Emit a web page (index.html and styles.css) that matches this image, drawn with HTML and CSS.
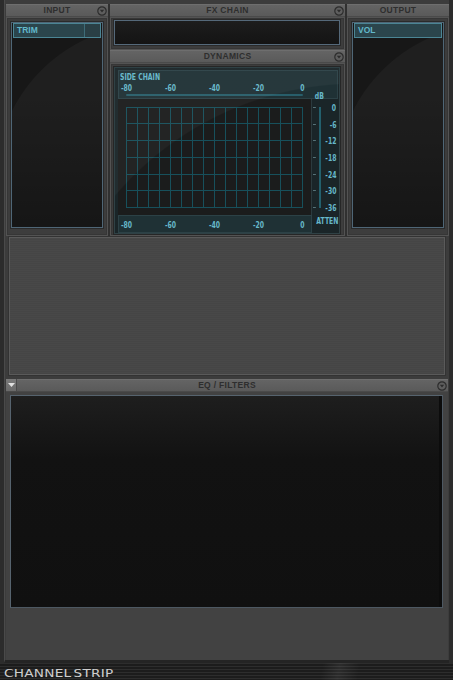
FILE: index.html
```html
<!DOCTYPE html>
<html lang="en">
<head>
<meta charset="utf-8">
<title>Channel Strip</title>
<link rel="stylesheet" href="styles.css">
</head>
<body>
<div class="strip">
  <div class="main">
    <div class="top">
      <section class="col">
        <header class="hdr">
          <span class="hdr-title">INPUT</span>
          <svg class="hdr-icon" width="10" height="10" viewBox="0 0 10 10"><circle cx="5" cy="5" r="4.2" fill="#5e5e5e" stroke="#2c2c2c" stroke-width="1.2"/><path d="M2.8 3.7H7.2L5 6.6Z" fill="#2c2c2c"/></svg>
        </header>
        <div class="col-body io-body">
          <div class="slot">
            <div class="slot-label"><span class="slot-name">TRIM</span><span class="slot-seg"></span></div>
          </div>
        </div>
      </section>

      <section class="col">
        <header class="hdr">
          <span class="hdr-title">FX CHAIN</span>
          <svg class="hdr-icon" width="10" height="10" viewBox="0 0 10 10"><circle cx="5" cy="5" r="4.2" fill="#5e5e5e" stroke="#2c2c2c" stroke-width="1.2"/><path d="M2.8 3.7H7.2L5 6.6Z" fill="#2c2c2c"/></svg>
        </header>
        <div class="col-body fx-body">
          <div class="fx-box"></div>
        </div>
        <header class="hdr">
          <span class="hdr-title">DYNAMICS</span>
          <svg class="hdr-icon" width="10" height="10" viewBox="0 0 10 10"><circle cx="5" cy="5" r="4.2" fill="#5e5e5e" stroke="#2c2c2c" stroke-width="1.2"/><path d="M2.8 3.7H7.2L5 6.6Z" fill="#2c2c2c"/></svg>
        </header>
        <div class="col-body dyn-body">
          <div class="dyn">
            <div class="sc-box">
              <div class="sc-title"><span class="nt nt-left">SIDE CHAIN</span></div>
              <div class="scale sc-scale"><span class="nt">-80</span><span class="nt">-60</span><span class="nt">-40</span><span class="nt">-20</span><span class="nt">0</span></div>
              <div class="sc-bar"></div>
              <div class="db"><span class="nt">dB</span></div>
            </div>
            <div class="graph">
              <svg class="grid-svg" width="177" height="101" viewBox="0 0 177 101">
                <g stroke="#17505b" stroke-width="1" fill="none">
                  <path d="M0.5 0V101M11.5 0V101M22.5 0V101M33.5 0V101M44.5 0V101M55.5 0V101M66.5 0V101M77.5 0V101M88.5 0V101M99.5 0V101M110.5 0V101M121.5 0V101M132.5 0V101M143.5 0V101M154.5 0V101M165.5 0V101M176.5 0V101"/>
                  <path d="M0 0.5H177M0 16.5H177M0 33.5H177M0 50.5H177M0 67.5H177M0 83.5H177M0 100.5H177"/>
                </g>
              </svg>
            </div>
            <div class="atten">
              <div class="ticks"><i></i><i></i><i></i><i></i><i></i><i></i><i></i></div>
              <div class="vbar"></div>
              <div class="atten-labels"><span class="nt nt-right">0</span><span class="nt nt-right">-6</span><span class="nt nt-right">-12</span><span class="nt nt-right">-18</span><span class="nt nt-right">-24</span><span class="nt nt-right">-30</span><span class="nt nt-right">-36</span></div>
            </div>
            <div class="in-box">
              <div class="scale"><span class="nt">-80</span><span class="nt">-60</span><span class="nt">-40</span><span class="nt">-20</span><span class="nt">0</span></div>
            </div>
            <div class="atten-title"><span class="nt">ATTEN</span></div>
          </div>
        </div>
      </section>

      <section class="col">
        <header class="hdr">
          <span class="hdr-title">OUTPUT</span>
        </header>
        <div class="col-body io-body">
          <div class="slot">
            <div class="slot-label"><span class="slot-name">VOL</span></div>
          </div>
        </div>
      </section>
    </div>

    <div class="blank-wrap">
      <div class="blank-panel"></div>
    </div>

    <header class="hdr eq-hdr">
      <span class="eq-btn"><svg width="7" height="4" viewBox="0 0 7 4"><path d="M0 0H7L3.5 4Z" fill="#e2e2e2"/></svg></span>
      <span class="hdr-title">EQ / FILTERS</span>
      <svg class="hdr-icon" width="10" height="10" viewBox="0 0 10 10"><circle cx="5" cy="5" r="4.2" fill="#5e5e5e" stroke="#2c2c2c" stroke-width="1.2"/><path d="M2.8 3.7H7.2L5 6.6Z" fill="#2c2c2c"/></svg>
    </header>
    <div class="eq-body">
      <div class="eq-screen"></div>
    </div>
  </div>
  <footer class="footer"><span class="footer-title">CHANNEL STRIP</span></footer>
</div>
</body>
</html>
```

FILE: styles.css
```css
* { box-sizing: border-box; margin: 0; padding: 0; }

html, body { width: 453px; height: 680px; overflow: hidden; }

body {
  background: #2b2b2b;
  font-family: "Liberation Sans", Arial, sans-serif;
}

.strip {
  width: 453px;
  height: 680px;
  display: flex;
  flex-direction: column;
  background: #2c2c2c;
}

.main {
  width: 445px;
  height: 663px;
  margin-left: 4px;
  padding: 4px 1px 0 1px;
  background: #3c3c3c;
  border-left: 1px solid #4a4a4a;
  border-bottom: 3px solid #242424;
  display: flex;
  flex-direction: column;
}

/* ---------- headers ---------- */
.hdr {
  height: 13px;
  flex: none;
  display: grid;
  grid-template-columns: 11px 1fr 11px;
  align-items: center;
  background: linear-gradient(#646464, #5a5a5a);
  border-top: 1px solid #6e6e6e;
  border-bottom: 1px solid #4a4a4a;
  font-size: 8.5px;
  font-weight: bold;
  letter-spacing: 0.3px;
  color: #2e2e2e;
  line-height: 11px;
}

.hdr-title {
  grid-column: 2;
  text-align: center;
}

.hdr-icon {
  grid-column: 3;
  display: block;
  justify-self: start;
}

/* ---------- top row ---------- */
.top {
  height: 232px;
  flex: none;
  display: grid;
  grid-template-columns: 102px 235px 102px;
  column-gap: 2px;
  background: #303030;
}

.col {
  display: flex;
  flex-direction: column;
  background: #3c3c3c;
}

.col-body {
  border: 1px solid #535353;
  box-shadow: inset 0 0 0 1px #363636;
  background: #3d3d3d;
}

.io-body {
  flex: 1;
  padding: 4px 4px 7px 4px;
  display: flex;
}

.slot {
  flex: 1;
  border: 1px solid #4f6676;
  box-shadow: 0 0 0 1px #2a2a2a;
  padding: 0 1px;
  background:
    linear-gradient(to bottom, rgba(0,0,0,0) 35%, rgba(0,0,0,0.3) 100%),
    radial-gradient(circle 157px at 140px 158px, #1f1f1f 99.4%, #171717 100%);
}

.slot-label {
  height: 15px;
  display: flex;
  background: #2b454c;
  border: 1px solid #4b8594;
  color: #62b8ca;
  font-size: 8.5px;
  font-weight: bold;
  line-height: 13px;
}

.slot-name {
  flex: 1;
  padding-left: 3px;
}

.slot-seg {
  width: 16px;
  border-left: 1px solid #3e6c78;
  background: #2a3f45;
}

.fx-body {
  height: 33px;
  flex: none;
  padding: 2px 4px 4px 3px;
  display: flex;
}

.fx-box {
  flex: 1;
  border: 1px solid #55697a;
  box-shadow: 0 0 0 1px #2a2a2a;
  background: linear-gradient(#1d1d1d, #141414);
}

.dyn-body {
  flex: 1;
  padding: 3px 4px 1px 3px;
  display: flex;
}

/* ---------- dynamics ---------- */
.dyn {
  position: relative;
  width: 226px;
  height: 167px;
  border: 1px solid #2f4145;
  box-shadow: 0 0 0 1px #262626;
  background: #1a2528;
  padding: 2px 1px 0 3px;
  display: grid;
  grid-template-columns: 194px 26px;
  grid-template-rows: 29px 116px 18px;
  font-family: "DejaVu Sans Condensed", "Liberation Sans", sans-serif;
  font-weight: bold;
  font-size: 9.5px;
  line-height: 9px;
  color: #66b8ca;
}

.nt {
  display: inline-block;
  transform: scaleX(0.72);
  transform-origin: center;
}

.nt-left { transform-origin: left center; }
.nt-right { transform-origin: right center; }

.dyn::after {
  content: "";
  position: absolute;
  inset: 0;
  pointer-events: none;
  background: radial-gradient(circle 318px at 242px 333px, rgba(255,255,255,0) 99.6%, rgba(255,255,255,0.035) 100%);
}

.sc-box {
  grid-column: 1 / 3;
  display: grid;
  grid-template-columns: 1fr auto;
  grid-template-rows: 9px 9px 2px;
  row-gap: 1px;
  align-content: start;
  padding-top: 1px;
  background: #1f3135;
  border: 1px solid #2c4146;
}

.sc-title {
  grid-column: 1;
  grid-row: 1;
  padding-left: 1px;
  margin-bottom: 1px;
}

.sc-scale {
  grid-column: 1;
  grid-row: 2;
  margin-top: 1px;
}

.sc-bar {
  grid-column: 1;
  grid-row: 3;
  margin-top: 2px;
  margin-left: 7px;
  width: 177px;
  height: 2px;
  border-radius: 1px;
  background: #285e6a;
}

.db {
  grid-column: 2;
  grid-row: 2 / 4;
  align-self: end;
  margin: 0 11px -6px 0;
}

.scale {
  display: grid;
  grid-template-columns: repeat(5, 21px);
  column-gap: 23px;
  margin-left: -3px;
  text-align: center;
}

.graph {
  grid-column: 1;
  grid-row: 2;
  background: #1b1c1c;
  border-right: 1px solid #2b3a3e;
  padding: 8px 0 0 8px;
}

.grid-svg { display: block; }

.atten {
  grid-column: 2;
  grid-row: 2;
  display: flex;
  padding-left: 1px;
}

.ticks {
  width: 3px;
  height: 109px;
  margin-top: 4px;
  display: flex;
  flex-direction: column;
  justify-content: space-between;
}

.ticks i {
  display: block;
  height: 9px;
  background: linear-gradient(#557278, #557278) center / 3px 1px no-repeat;
}

.vbar {
  width: 2px;
  height: 101px;
  margin: 8px 0 0 3px;
  background: #23606d;
}

.atten-labels {
  flex: 1;
  height: 109px;
  margin-top: 4px;
  padding-right: 2px;
  display: flex;
  flex-direction: column;
  justify-content: space-between;
  align-items: flex-end;
}

.in-box {
  grid-column: 1;
  grid-row: 3;
  background: #1f3135;
  border: 1px solid #2c4146;
  padding-top: 4px;
}

.atten-title {
  grid-column: 2;
  grid-row: 3;
  padding-top: 1px;
  text-align: center;
}

/* ---------- middle blank panel ---------- */
.blank-wrap {
  height: 143px;
  flex: none;
  padding: 1px 3px 4px 3px;
}

.blank-panel {
  height: 138px;
  border: 1px solid #5a5a5a;
  box-shadow: 0 0 0 1px #333333;
  background: repeating-linear-gradient(#484848 0 1px, #454545 1px 2px);
}

/* ---------- EQ ---------- */
.eq-hdr {
  grid-template-columns: 11px 1fr 11px;
}

.eq-btn {
  grid-column: 1;
  height: 12px;
  margin-top: -1px;
  display: flex;
  align-items: center;
  justify-content: center;
  background: linear-gradient(#7a7a7a, #6a6a6a);
  border-right: 1px solid #4a4a4a;
}

.eq-btn svg { display: block; }

.eq-body {
  flex: 1;
  padding: 3px 5px 0 4px;
  background: #424242;
}

.eq-screen {
  height: 213px;
  border-top: 1px solid #56636e;
  border-left: 1px solid #56636e;
  border-bottom: 1px solid #4d5862;
  border-right: 1px solid #4d5862;
  background: linear-gradient(#1e1e1e, #121212 30%, #101010);
  box-shadow: inset -3px 0 0 #0c0c0c;
}

/* ---------- footer ---------- */
.footer {
  height: 17px;
  flex: none;
  padding-left: 4px;
  background:
    linear-gradient(100deg, rgba(255,255,255,0) 318px, rgba(255,255,255,0.07) 335px, rgba(255,255,255,0) 355px),
    repeating-linear-gradient(#2d2d2d 0 1px, #1c1c1c 1px 3px);
  overflow: hidden;
}

.footer-title {
  display: inline-block;
  font-family: "DejaVu Sans", sans-serif;
  font-size: 11px;
  line-height: 17px;
  color: #cfcfcf;
  letter-spacing: 0.2px;
  word-spacing: -2px;
  transform: scaleX(1.24);
  transform-origin: left center;
}
```
